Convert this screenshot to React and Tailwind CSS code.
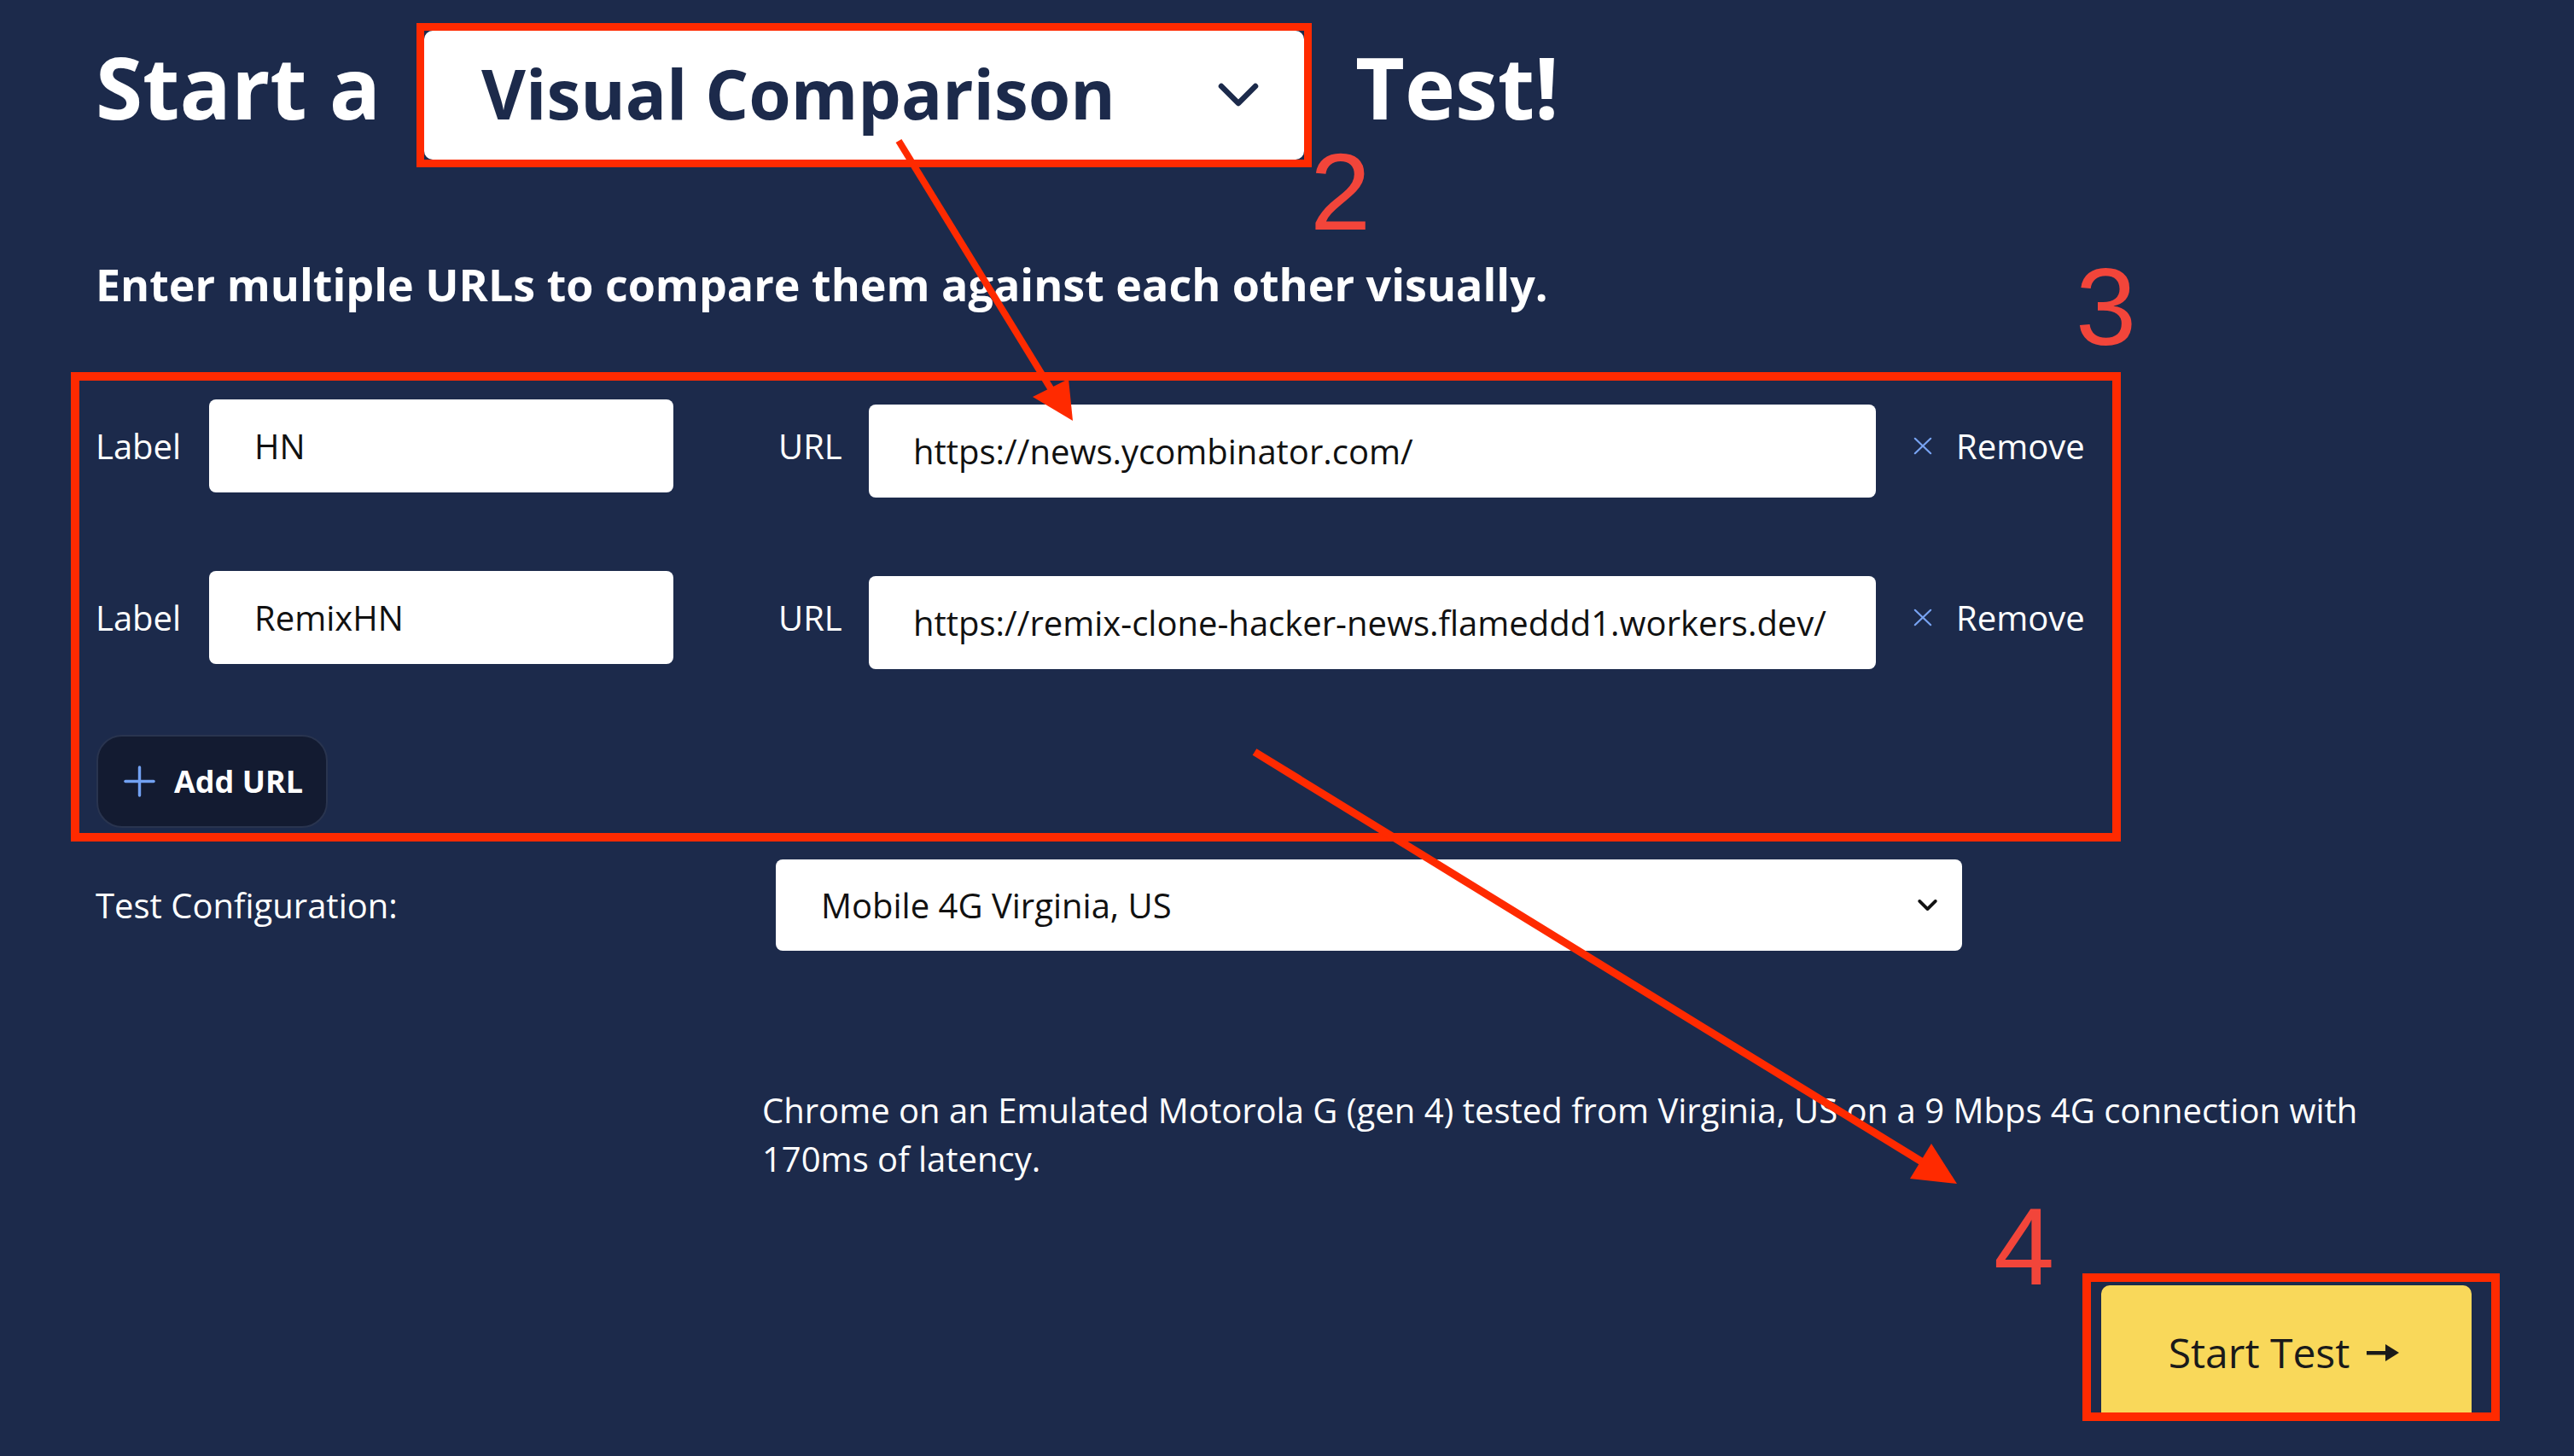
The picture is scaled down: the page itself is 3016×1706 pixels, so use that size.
import React from 'react';

// annotation red used for the boxes and arrows drawn over the form
function ChevronDown({ className, strokeWidth = 5 }) {
  return (
    <svg viewBox="0 0 48 28" className={className} fill="none" stroke="currentColor" strokeWidth={strokeWidth} strokeLinecap="round" strokeLinejoin="round">
      <polyline points="4,4 24,24 44,4" />
    </svg>
  );
}

function CloseIcon() {
  return (
    <svg viewBox="0 0 24 22" className="w-[22px] h-[21px] text-[#78a3f2]" fill="none" stroke="currentColor" strokeWidth="2.4" strokeLinecap="round">
      <line x1="2" y1="1.5" x2="22" y2="20.5" />
      <line x1="22" y1="1.5" x2="2" y2="20.5" />
    </svg>
  );
}

function PlusIcon() {
  return (
    <svg viewBox="0 0 38 38" className="w-[37px] h-[37px] text-[#72a1f2]" fill="none" stroke="currentColor" strokeWidth="3.5" strokeLinecap="round">
      <line x1="19" y1="2" x2="19" y2="36" />
      <line x1="2" y1="19" x2="36" y2="19" />
    </svg>
  );
}

function ArrowRight() {
  return (
    <svg viewBox="0 0 38 20" className="w-[38px] h-[20px] ml-[20px]" fill="#1a1a1a">
      <rect x="0" y="8" width="26" height="4.5" />
      <polygon points="22,0 38,10 22,20" />
    </svg>
  );
}

function UrlRow({ label, url, className = '' }) {
  return (
    <div className={`flex items-center h-[109px] ${className}`}>
      <span className="w-[133px] text-[40px]">Label</span>
      <div className="flex items-center w-[544px] h-[109px] rounded-[8px] bg-white pl-[53px] text-[40px] text-[#111]">
        {label}
      </div>
      <span className="ml-[123px] w-[106px] text-[40px]">URL</span>
      <div className="flex items-center w-[1180px] h-[109px] mt-[12px] rounded-[8px] bg-white pl-[52px] text-[40px] text-[#111]">
        {url}
      </div>
      <button type="button" className="flex items-center ml-[44px] text-[40px] text-white">
        <CloseIcon />
        <span className="ml-[28px]">Remove</span>
      </button>
    </div>
  );
}

export default function App() {
  return (
    <div className="relative w-[3016px] h-[1706px] overflow-hidden bg-[#1c2a4b] pl-[112px] pt-[27px] font-['Open_Sans','Liberation_Sans',sans-serif] text-white">
      {/* Heading with test type picker */}
      <div className="flex items-center">
        <h1 className="w-[376px] -mt-[21px] text-[100px] font-bold leading-none">Start a</h1>
        <div className="border-[9px] border-[#ff2a00]">
          <div className="flex items-center justify-between w-[1031px] h-[151px] rounded-[10px] bg-white pl-[67px] pr-[53px]">
            <span className="-mt-[6px] text-[80px] font-bold leading-none text-[#1c2a4b]">Visual Comparison</span>
            <ChevronDown className="w-[48px] h-[28px] -mt-[2px] text-[#1c2a4b]" strokeWidth={6.5} />
          </div>
        </div>
        <h1 className="ml-[51px] -mt-[21px] text-[100px] font-bold leading-none">Test!</h1>
      </div>

      <p className="mt-[101px] text-[52px] font-bold leading-[71px]">
        Enter multiple URLs to compare them against each other visually.
      </p>

      {/* URL list */}
      <div className="mt-[68px] -ml-[29px] w-[2402px] h-[550px] border-[10px] border-[#ff2a00] pl-[19px] pt-[22px]">
        <UrlRow label="HN" url="https://news.ycombinator.com/" />
        <UrlRow label="RemixHN" url="https://remix-clone-hacker-news.flameddd1.workers.dev/" className="mt-[92px]" />
        <button type="button" className="flex items-center mt-[83px] ml-[1px] w-[271px] h-[109px] rounded-[30px] border-2 border-[#29344f] bg-[#131b31] pl-[30px]">
          <PlusIcon />
          <span className="ml-[22px] text-[36px] font-bold">Add URL</span>
        </button>
      </div>

      {/* Test configuration */}
      <div className="flex items-center mt-[21px] h-[107px]">
        <span className="w-[797px] text-[40px]">Test Configuration:</span>
        <div className="flex items-center justify-between w-[1390px] h-[107px] rounded-[8px] bg-white pl-[53px] pr-[29px] text-[40px] text-[#111]">
          <span>Mobile 4G Virginia, US</span>
          <ChevronDown className="w-[23px] h-[13px] text-[#111]" strokeWidth={8} />
        </div>
      </div>

      <p className="mt-[158px] ml-[781px] w-[1920px] text-[40px] leading-[57px]">
        Chrome on an Emulated Motorola G (gen 4) tested from Virginia, US on a 9 Mbps 4G connection with 170ms of latency.
      </p>

      <div className="mt-[106px] ml-[2328px] w-[489px] border-[10px] border-[#ff2a00] pt-[4px] pl-[12px]">
        <button type="button" className="flex items-center justify-center w-[434px] h-[149px] rounded-t-[10px] bg-[#f9d85a] pt-[8px] pr-[6px] text-[48px] text-[#1a1a1a]">
          <span>Start Test</span>
          <ArrowRight />
        </button>
      </div>

      {/* Step numbers */}
      <span className="absolute left-[1535px] top-[161px] text-[128px] leading-none text-[#f2453a] font-['Liberation_Sans',sans-serif]">2</span>
      <span className="absolute left-[2432px] top-[296px] text-[128px] leading-none text-[#f2453a] font-['Liberation_Sans',sans-serif]">3</span>
      <span className="absolute left-[2336px] top-[1397px] text-[128px] leading-none text-[#f2453a] font-['Liberation_Sans',sans-serif]">4</span>

      {/* Annotation arrows */}
      <svg className="absolute inset-0 w-[3016px] h-[1706px] pointer-events-none" viewBox="0 0 3016 1706">
        <line x1="1053" y1="165" x2="1234" y2="460" stroke="#ff2a00" strokeWidth="8" />
        <polygon points="1257,493 1210,465 1252,444" fill="#ff2a00" />
        <line x1="1470" y1="881" x2="2258" y2="1365" stroke="#ff2a00" strokeWidth="9" />
        <polygon points="2293,1387 2238,1381 2263,1340" fill="#ff2a00" />
      </svg>
    </div>
  );
}
